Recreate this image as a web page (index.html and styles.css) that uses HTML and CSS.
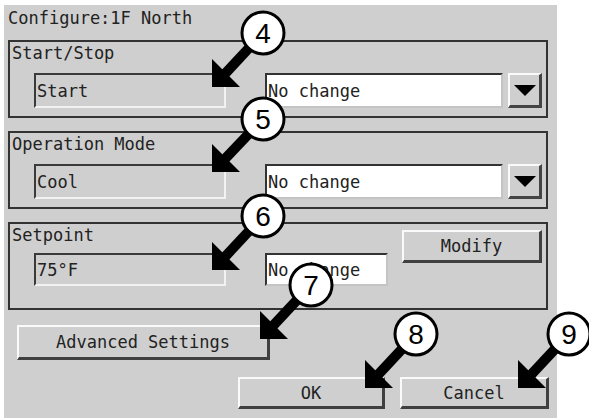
FILE: index.html
```html
<!DOCTYPE html>
<html lang="en">
<head>
    <meta charset="UTF-8">
    <title>Configure:1F North</title>
    <link rel="stylesheet" href="styles.css">
</head>
<body>

    <div class="dialog">
        <div class="title">Configure:1F North</div>

        <div class="group">
            <div class="group-label">Start/Stop</div>
            <div class="row">
                <div class="field">Start</div>
                <div class="combo">
                    <div class="combo-text">No change</div>
                    <div class="combo-btn"><span class="tri"></span></div>
                </div>
            </div>
        </div>

        <div class="group">
            <div class="group-label">Operation Mode</div>
            <div class="row">
                <div class="field">Cool</div>
                <div class="combo">
                    <div class="combo-text">No change</div>
                    <div class="combo-btn"><span class="tri"></span></div>
                </div>
            </div>
        </div>

        <div class="group group-setpoint">
            <div class="setpoint-main">
                <div class="group-label">Setpoint</div>
                <div class="row row-setpoint">
                    <div class="field">75°F</div>
                    <div class="entry">No change</div>
                </div>
            </div>
            <button class="btn btn-modify">Modify</button>
        </div>

        <div class="advanced">
            <button class="btn btn-advanced">Advanced Settings</button>
        </div>

        <div class="footer">
            <button class="btn btn-ok">OK</button>
            <button class="btn btn-cancel">Cancel</button>
        </div>
    </div>

    <!-- callouts drawn over the dialog -->
    <svg class="callouts" width="589" height="418" viewBox="0 0 589 418">
        <g class="callout">
            <polygon points="212,87 212,59 240,87"/>
            <line x1="222" y1="77" x2="263" y2="33"/>
            <circle cx="263" cy="33" r="21"/>
            <text x="263" y="43">4</text>
        </g>
        <g class="callout">
            <polygon points="212,172 212,144 240,172"/>
            <line x1="222" y1="162" x2="263" y2="119"/>
            <circle cx="263" cy="119" r="21"/>
            <text x="263" y="129">5</text>
        </g>
        <g class="callout">
            <polygon points="212,270 212,242 240,270"/>
            <line x1="222" y1="260" x2="263" y2="216"/>
            <circle cx="263" cy="216" r="21"/>
            <text x="263" y="226">6</text>
        </g>
        <g class="callout">
            <polygon points="260,339 260,311 288,339"/>
            <line x1="270" y1="329" x2="311" y2="285"/>
            <circle cx="311" cy="285" r="21"/>
            <text x="311" y="295">7</text>
        </g>
        <g class="callout">
            <polygon points="365,388 365,360 393,388"/>
            <line x1="375" y1="378" x2="416" y2="334"/>
            <circle cx="416" cy="334" r="21"/>
            <text x="416" y="344">8</text>
        </g>
        <g class="callout">
            <polygon points="518,388 518,360 546,388"/>
            <line x1="528" y1="378" x2="569" y2="334"/>
            <circle cx="569" cy="334" r="21"/>
            <text x="569" y="344">9</text>
        </g>
    </svg>

</body>
</html>
```

FILE: styles.css
```css
/* dialog screenshot */
body {
    margin: 0;
    background-color: #ffffff;
    font-family: "DejaVu Sans Mono", "Liberation Mono", monospace;
    font-size: 17px;
    color: #222;
}

.dialog {
    box-sizing: border-box;
    width: 553px;
    height: 413px;
    margin: 5px 0 0 4px;
    padding: 3px 9px 0 4px;
    background-color: #cfcfcf;
}

.title {
    line-height: 20px;
}

.group {
    margin-top: 12px;
    border: 2px solid #333;
    padding: 1px 4px 8px 2px;
}

.group + .group {
    margin-top: 13px;
}

.group-label {
    line-height: 20px;
}

.row {
    display: flex;
    margin-top: 10px;
    height: 35px;
}

.field {
    box-sizing: border-box;
    width: 192px;
    margin-left: 22px;
    padding-left: 1px;
    display: flex;
    align-items: center;
    border-style: solid;
    border-width: 2px;
    border-color: #3a3a3a #f2f2f2 #f2f2f2 #3a3a3a;
}

.combo {
    display: flex;
    gap: 5px;
    margin-left: 39px;
}

.combo-text,
.entry {
    box-sizing: border-box;
    width: 238px;
    padding-left: 1px;
    display: flex;
    align-items: center;
    background-color: #fff;
    border-style: solid;
    border-width: 2px;
    border-color: #333 #c4c4c4 #c4c4c4 #333;
}

.combo-btn {
    box-sizing: border-box;
    width: 34px;
    display: flex;
    align-items: center;
    justify-content: center;
    border-style: solid;
    border-width: 2px 3px 3px 2px;
    border-color: #fafafa #444 #444 #fafafa;
}

.tri {
    width: 0;
    height: 0;
    border-left: 11px solid transparent;
    border-right: 11px solid transparent;
    border-top: 11px solid #000;
}

.group-setpoint {
    display: flex;
    padding-bottom: 22px;
}

.row-setpoint {
    margin-top: 8px;
    height: 33px;
}

.entry {
    width: 123px;
    margin-left: 39px;
}

.btn {
    box-sizing: border-box;
    padding: 0;
    font-family: inherit;
    font-size: 17px;
    color: #222;
    background-color: #cfcfcf;
    border-style: solid;
    border-width: 2px 3px 3px 2px;
    border-color: #fafafa #404040 #404040 #fafafa;
}

.btn-modify {
    width: 140px;
    height: 33px;
    margin-top: 5px;
    margin-left: auto;
}

.advanced {
    margin-top: 15px;
    padding-left: 9px;
}

.btn-advanced {
    width: 253px;
    height: 35px;
}

.footer {
    display: flex;
    justify-content: flex-end;
    gap: 15px;
    margin-top: 17px;
    margin-right: -1px;
}

.btn-ok {
    width: 147px;
    height: 32px;
}

.btn-cancel {
    width: 149px;
    height: 32px;
}

.callouts {
    position: absolute;
    top: 0;
    left: 0;
    pointer-events: none;
}

.callout polygon {
    fill: #000;
}

.callout line {
    stroke: #000;
    stroke-width: 10;
}

.callout circle {
    fill: #fff;
    stroke: #000;
    stroke-width: 3;
}

.callout text {
    font-family: "Liberation Sans", Arial, sans-serif;
    font-size: 28px;
    text-anchor: middle;
    fill: #000;
}
```
